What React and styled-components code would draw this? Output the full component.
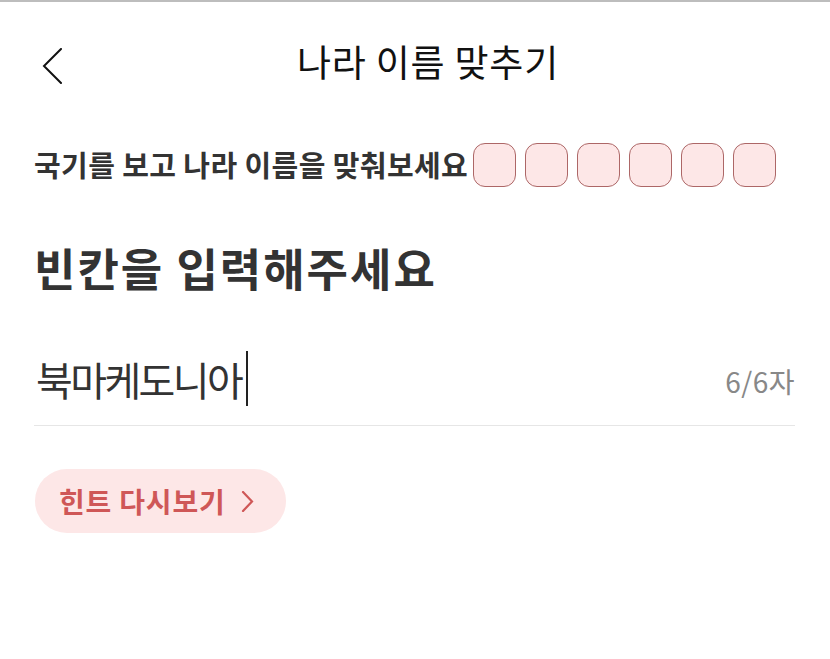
import React from 'react'
import styled, { createGlobalStyle } from 'styled-components'

const GlobalStyle = createGlobalStyle`
  html, body {
    margin: 0;
    padding: 0;
    background: #ffffff;
  }
  body {
    font-family: 'Noto Sans CJK KR', 'Noto Sans', sans-serif;
  }
`

const Page = styled.div`
  width: 830px;
  height: 659px;
  box-sizing: border-box;
  border-top: 2px solid #bdbdbd;
  background: #fff;
`

const Header = styled.header`
  position: relative;
  height: 126px;
  display: flex;
  align-items: center;
  justify-content: center;
`

const BackButton = styled.button`
  position: absolute;
  left: 36px;
  top: 42px;
  width: 32px;
  height: 44px;
  padding: 0;
  border: none;
  background: none;
  display: flex;
  align-items: center;
  justify-content: center;
`

const Title = styled.h1`
  margin: 0 0 9px 26px;
  font-size: 37px;
  font-weight: 400;
  color: #111;
  letter-spacing: 0.8px;
`

const Body = styled.main`
  padding: 14px 35px 0 36px;
`

const PromptRow = styled.div`
  display: flex;
  align-items: center;
  gap: 5px;
  height: 46px;
`

const Prompt = styled.p`
  margin: 0 0 2px -2px;
  font-size: 29px;
  font-weight: 700;
  color: #333;
  letter-spacing: 0.4px;
`

const Slots = styled.div`
  display: flex;
  gap: 9px;
`

const Slot = styled.span`
  width: 43px;
  height: 44px;
  box-sizing: border-box;
  border: 1.6px solid #ad6767;
  border-radius: 12px;
  background: #fde7e7;
`

const Heading = styled.h2`
  margin: 50px 0 0 -2px;
  font-size: 45px;
  font-weight: 700;
  color: #333;
  letter-spacing: 2px;
  line-height: 60px;
`

const InputRow = styled.div`
  margin-top: 42px;
  display: flex;
  align-items: center;
  justify-content: space-between;
  height: 77px;
  border-bottom: 1px solid #e6e6e6;
  padding-bottom: 8px;
  margin-left: -2px;
  padding-left: 2px;
`

const Answer = styled.div`
  display: flex;
  align-items: center;
  font-size: 40px;
  color: #333;
  letter-spacing: -2.6px;
`

const Caret = styled.span`
  display: inline-block;
  width: 2px;
  height: 55px;
  margin-left: 5px;
  background: #222;
`

const Counter = styled.span`
  font-size: 28px;
  color: #888;
  letter-spacing: 0.5px;
  margin-top: 4px;
`

const HintButton = styled.button`
  margin-top: 43px;
  margin-left: -1px;
  height: 64px;
  padding: 0 32px 0 24px;
  border: none;
  border-radius: 32px;
  background: #fde7e7;
  display: flex;
  align-items: center;
  gap: 15px;
  font-family: 'Noto Sans CJK KR', 'Noto Sans', sans-serif;
  font-size: 28px;
  font-weight: 700;
  color: #cf5757;
  letter-spacing: 0.8px;
`

function Chevron ({ dir = 'left', color = '#111', stroke = 2 }) {
  const d = dir === 'left' ? 'M19 1 L2 18 L19 35' : 'M2 1 L11 10.5 L2 20'
  const w = dir === 'left' ? 21 : 13
  const h = dir === 'left' ? 36 : 21
  return (
    <svg width={w} height={h} viewBox={`0 0 ${w} ${h}`} fill="none">
      <path d={d} stroke={color} strokeWidth={stroke} strokeLinecap="round" strokeLinejoin="miter" />
    </svg>
  )
}

export default function App () {
  return (
    <Page>
      <GlobalStyle />
      <Header>
        <BackButton aria-label="뒤로">
          <Chevron dir="left" />
        </BackButton>
        <Title>나라 이름 맞추기</Title>
      </Header>
      <Body>
        <PromptRow>
          <Prompt>국기를 보고 나라 이름을 맞춰보세요</Prompt>
          <Slots>
            {[0, 1, 2, 3, 4, 5].map(i => <Slot key={i} />)}
          </Slots>
        </PromptRow>
        <Heading>빈칸을 입력해주세요</Heading>
        <InputRow>
          <Answer>
            북마케도니아
            <Caret />
          </Answer>
          <Counter>6/6자</Counter>
        </InputRow>
        <HintButton>
          힌트 다시보기
          <Chevron dir="right" color="#cf5757" stroke={2.2} />
        </HintButton>
      </Body>
    </Page>
  )
}
